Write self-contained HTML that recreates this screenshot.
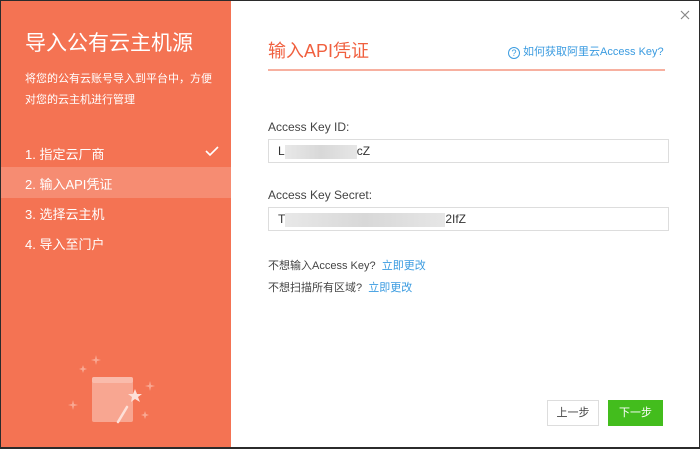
<!DOCTYPE html><html><head><meta charset="utf-8"><style>
*{margin:0;padding:0;box-sizing:border-box}
body{width:700px;height:448px;background:#2b2b2b;font-family:"Liberation Sans","Noto Sans CJK SC",sans-serif;position:relative;overflow:hidden}
.w{position:absolute;left:1px;top:1px;width:698px;height:446px;background:#fff}
.l{position:absolute;left:0;top:0;width:230px;height:446px;background:#f47353}
.a{position:absolute;white-space:nowrap}
.blur{display:inline-block;height:14px;background:linear-gradient(90deg,#e8e8e8,#d8d8d8,#e6e6e6);vertical-align:middle}
.inp{position:absolute;left:267px;width:401px;height:24px;border:1px solid #ddd;font-size:12px;color:#333;padding-left:9px;line-height:22px}
</style></head><body><div class="w">
<div class="l">
<div class="a" style="left:24px;top:26px;font-size:21px;color:#fff">导入公有云主机源</div>
<div class="a" style="left:24px;top:68px;font-size:11px;color:#fff;line-height:21px">将您的公有云账号导入到平台中，方便<br>对您的云主机进行管理</div>
<div class="a" style="left:0;top:166px;width:230px;height:31px;background:#f68c72"></div>
<div class="a" style="left:24px;top:143px;font-size:13px;color:#fff">1. 指定云厂商</div>
<svg class="a" style="left:204px;top:144px" width="14" height="12"><path d="M1 6 L5 10 L13 2" fill="none" stroke="#fff" stroke-width="1.6"/></svg>
<div class="a" style="left:24px;top:173px;font-size:13px;color:#fff">2. 输入API凭证</div>
<div class="a" style="left:24px;top:203px;font-size:13px;color:#fff">3. 选择云主机</div>
<div class="a" style="left:24px;top:233px;font-size:13px;color:#fff">4. 导入至门户</div>
<svg class="a" style="left:66px;top:348px" width="100" height="100" viewBox="66 348 100 100">
<rect x="91" y="376" width="41" height="45" rx="2" fill="#f9b7a6" opacity=".75"/>
<rect x="91" y="376" width="41" height="6" rx="2" fill="#fbc9bc" opacity=".6"/>
<path d="M134 388 l2 5 5 0 -4 3 2 5 -5 -3 -4 3 1 -5 -4 -3 5 0z" fill="#fde0d8"/>
<line x1="117" y1="421" x2="126" y2="406" stroke="#fde0d8" stroke-width="2.5" stroke-linecap="round"/>
<path d="M95 354 l1 4 4 1 -4 1 -1 4 -1 -4 -4 -1 4 -1z M82 364 l1 3 3 1 -3 1 -1 3 -1 -3 -3 -1 3 -1z M149 380 l1 4 4 1 -4 1 -1 4 -1 -4 -4 -1 4 -1z M72 399 l1 4 4 1 -4 1 -1 4 -1 -4 -4 -1 4 -1z M144 410 l1 3 3 1 -3 1 -1 3 -1 -3 -3 -1 3 -1z" fill="#f9a893"/>
</svg>
</div>
<svg class="a" style="left:679px;top:9px" width="10" height="10"><path d="M1 1L9 9M9 1L1 9" stroke="#888" stroke-width="1.2"/></svg>
<div class="a" style="left:267px;top:36px;font-size:18px;color:#f0603f">输入API凭证</div>
<div class="a" style="left:507px;top:42px;font-size:11px;color:#3a9be0"><span style="display:inline-block;width:12px;height:12px;border:1px solid #3a9be0;border-radius:50%;font-size:9px;text-align:center;line-height:11px;vertical-align:-1px">?</span> 如何获取阿里云Access Key?</div>
<div class="a" style="left:267px;top:68px;width:397px;height:2px;background:#f7b0a0"></div>
<div class="a" style="left:267px;top:119px;font-size:12px;color:#444">Access Key ID:</div>
<div class="inp" style="top:138px">L<span class="blur" style="width:72px"></span>cZ</div>
<div class="a" style="left:267px;top:187px;font-size:12px;color:#444">Access Key Secret:</div>
<div class="inp" style="top:206px">T<span class="blur" style="width:160px"></span>2IfZ</div>
<div class="a" style="left:267px;top:256px;font-size:11px;color:#444">不想输入Access Key? &nbsp;<span style="color:#3a9be0">立即更改</span></div>
<div class="a" style="left:267px;top:278px;font-size:11px;color:#444">不想扫描所有区域? &nbsp;<span style="color:#3a9be0">立即更改</span></div>
<div class="a" style="left:546px;top:399px;width:52px;height:26px;border:1px solid #ddd;font-size:11px;color:#444;text-align:center;line-height:24px">上一步</div>
<div class="a" style="left:607px;top:399px;width:55px;height:26px;background:#43bd1d;font-size:11px;color:#fff;text-align:center;line-height:26px">下一步</div>
</div></body></html>
